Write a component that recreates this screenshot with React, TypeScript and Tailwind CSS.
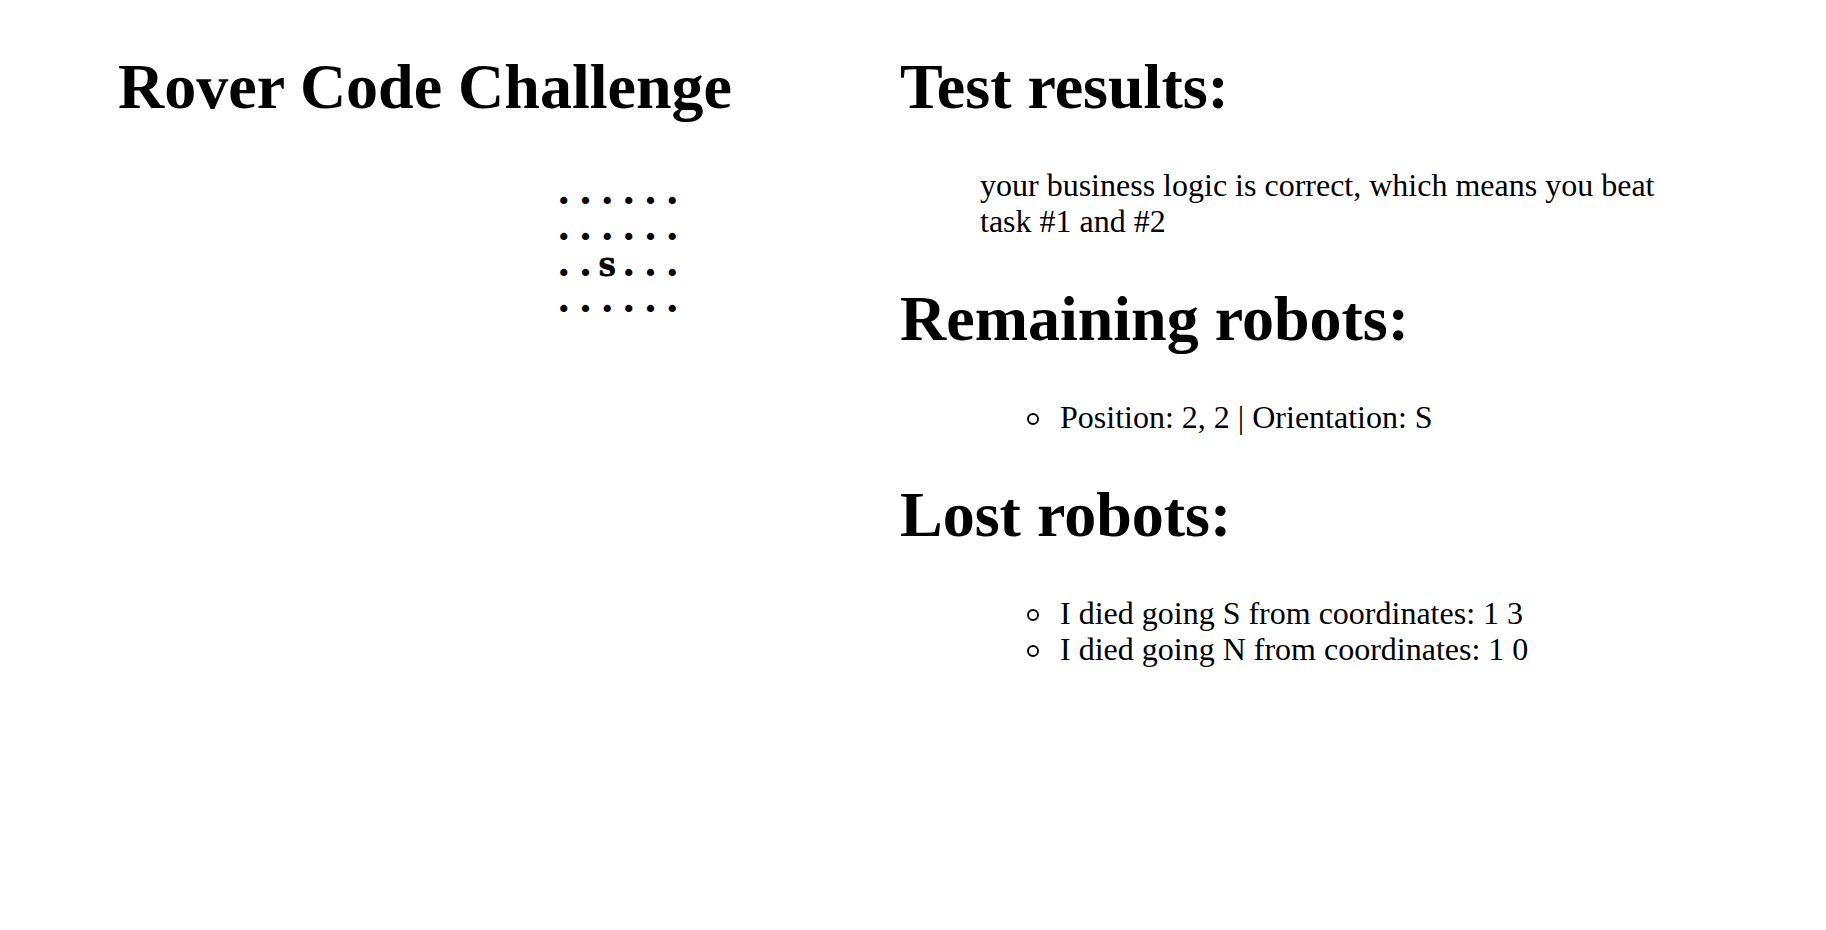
const grid = ["......", "......", "..S...", "......"];

const headingClass = "text-[64px] leading-[74px] font-bold";
const bulletClass =
  "flex items-center gap-[21px] before:mt-[3px] before:size-3 before:shrink-0 before:rounded-full before:border-2 before:border-black";

function Bullet({ text }: { text: string }) {
  return <li className={bulletClass}>{text}</li>;
}

function Planet() {
  return (
    <div className="ml-[435px] mt-[50px] w-[130px]">
      {grid.map((row, y) => (
        <div key={y} className="grid h-9 grid-cols-6 items-end text-center font-bold">
          {row.split("").map((cell, x) =>
            cell === "." ? (
              <span key={x} className="text-[32px] leading-9 [-webkit-text-stroke:2px_black]">{cell}</span>
            ) : (
              <span key={x} className="font-['DejaVu_Serif',serif] text-2xl leading-7 [-webkit-text-stroke:1px_black]">{cell}</span>
            )
          )}
        </div>
      ))}
    </div>
  );
}

export default function App() {
  return (
    <main className="flex min-h-screen bg-white pl-[118px] pr-32 pt-[50px] font-['Liberation_Serif',serif] text-black">
      <section className="w-[782px] shrink-0">
        <h1 className={headingClass}>Rover Code Challenge</h1>
        <Planet />
      </section>
      <section className="flex min-w-0 flex-1 flex-col gap-[43px] text-[32px] leading-9">
        <h1 className={headingClass}>Test results:</h1>
        <p className="pl-20">
          your business logic is correct, which means you beat task #1 and #2
        </p>
        <h1 className={headingClass}>Remaining robots:</h1>
        <ul className="pl-[127px]">
          <Bullet text="Position: 2, 2 | Orientation: S" />
        </ul>
        <h1 className={headingClass}>Lost robots:</h1>
        <ul className="pl-[127px]">
          <Bullet text="I died going S from coordinates: 1 3" />
          <Bullet text="I died going N from coordinates: 1 0" />
        </ul>
      </section>
    </main>
  );
}
